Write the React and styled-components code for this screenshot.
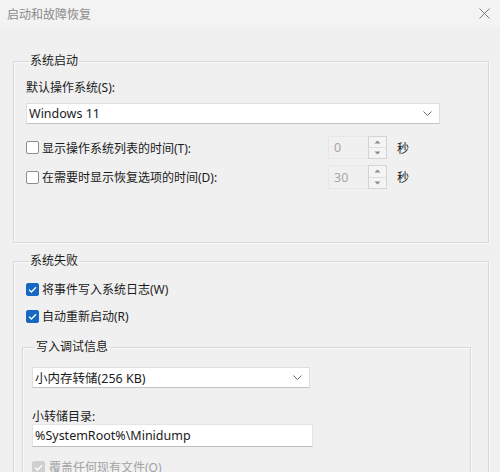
import React from "react";
import styled, { createGlobalStyle } from "styled-components";

const Global = createGlobalStyle`
  html, body { margin: 0; padding: 0; background: #f0f0f0; }
  body { font-family: "Noto Sans", "Noto Sans CJK SC", sans-serif; font-size: 12px; color: #1b1b1b; }
  #root { width: 500px; height: 472px; overflow: hidden; }
`;

const Window = styled.div`
  width: 500px;
  height: 472px;
  background: #f0f0f0;
  overflow: hidden;
`;

const TitleBar = styled.div`
  height: 27px;
  background: #f3f3f3;
  display: flex;
  align-items: center;
  justify-content: space-between;
  padding: 0 10px 0 7px;
  color: #8a8a8a;
  font-size: 12px;
`;

const Body = styled.div`
  padding: 26px 11px 0 13px;
`;

const Group = styled.fieldset`
  margin: ${(p) => p.$mt || 0}px ${(p) => p.$mr || 0}px 0 ${(p) => p.$ml || 0}px;
  padding: ${(p) => p.$pt}px 0 ${(p) => p.$pb || 0}px ${(p) => p.$pl}px;
  border: 1px solid #d9d9d9;
  box-shadow: inset 1px 1px 0 #fafafa, 1px 1px 0 #fafafa;
  min-width: 0;
  display: flex;
  flex-direction: column;
  align-items: flex-start;
`;

const Legend = styled.legend`
  margin-left: 3px;
  padding: 0 1px;
  line-height: 16px;
  font-size: 12px;
  color: #1b1b1b;
`;

const Label = styled.div`
  line-height: ${(p) => p.$lh || 16}px;
  margin-top: ${(p) => p.$mt || 0}px;
`;

const Select = styled.div`
  box-sizing: border-box;
  width: ${(p) => p.$w}px;
  height: ${(p) => p.$h || 21}px;
  margin-top: ${(p) => p.$mt || 0}px;
  background: #fff;
  border: 1px solid #dedede;
  border-bottom-color: #c4c4c4;
  display: flex;
  align-items: center;
  justify-content: space-between;
  padding: 0 7px 0 2px;
  font-size: 12.5px;
`;

const TextInput = styled.div`
  box-sizing: border-box;
  width: ${(p) => p.$w}px;
  height: 23px;
  background: #fff;
  border: 1px solid #e4e4e4;
  border-bottom-color: #bdbdbd;
  display: flex;
  align-items: center;
  padding: 0 2px;
  font-size: 12.5px;
`;

const Row = styled.div`
  display: grid;
  grid-template-columns: 302px auto auto;
  align-items: center;
  height: ${(p) => p.$h}px;
  margin-top: ${(p) => p.$mt || 0}px;
`;

const CheckLine = styled.label`
  display: flex;
  align-items: center;
  gap: ${(p) => p.$gap || 3}px;
  height: ${(p) => p.$h || 18}px;
  margin-top: ${(p) => p.$mt || 0}px;
  color: ${(p) => (p.$disabled ? "#a3a3a3" : "#1b1b1b")};
`;

const Box = styled.span`
  box-sizing: border-box;
  width: 13px;
  height: 13px;
  border-radius: 2px;
  flex: none;
  display: flex;
  align-items: center;
  justify-content: center;
  background: ${(p) => (p.$checked ? (p.$disabled ? "#cfcfcf" : "#1668c2") : "#fff")};
  border: 1px solid ${(p) => (p.$checked ? (p.$disabled ? "#cfcfcf" : "#1668c2") : "#8d8d8d")};
`;

const Spin = styled.div`
  display: flex;
  align-items: stretch;
  height: 100%;
`;

const SpinValue = styled.div`
  box-sizing: border-box;
  width: 40px;
  border: 1px solid #e8e8e8;
  border-right: none;
  background: #f0f0f0;
  color: #a6a6a6;
  display: flex;
  align-items: center;
  padding-left: 5px;
  font-size: 12.5px;
`;

const SpinButtons = styled.div`
  box-sizing: border-box;
  width: 19px;
  border: 1px solid #d4d4d4;
  display: flex;
  flex-direction: column;
  background: #f4f4f4;
`;

const SpinBtn = styled.div`
  flex: 1;
  display: flex;
  align-items: center;
  justify-content: center;
  & + & { border-top: 1px solid #dedede; }
`;

const Unit = styled.span`
  margin-left: 10px;
`;

const Check = () => (
  <svg width="9" height="7" viewBox="0 0 9 7">
    <path d="M1 3.6 L3.4 6 L8 1.2" fill="none" stroke="#fff" strokeWidth="1.3" />
  </svg>
);

const CheckBox = ({ checked, disabled }) => (
  <Box $checked={checked} $disabled={disabled}>{checked && <Check />}</Box>
);

const Chevron = () => (
  <svg width="9" height="5" viewBox="0 0 9 5">
    <path d="M0.5 0.5 L4.5 4.5 L8.5 0.5" fill="none" stroke="#6a6a6a" strokeWidth="1" />
  </svg>
);

const Tri = ({ up }) => (
  <svg width="7" height="4" viewBox="0 0 7 4">
    <path d={up ? "M0.5 3.5 L3.5 0.5 L6.5 3.5 Z" : "M0.5 0.5 L3.5 3.5 L6.5 0.5 Z"} fill="#8a8a8a" />
  </svg>
);

const SpinBox = ({ value }) => (
  <Spin>
    <SpinValue>{value}</SpinValue>
    <SpinButtons>
      <SpinBtn><Tri up /></SpinBtn>
      <SpinBtn><Tri /></SpinBtn>
    </SpinButtons>
  </Spin>
);

const Close = () => (
  <svg width="11" height="11" viewBox="0 0 11 11">
    <path d="M0.5 0.5 L10.5 10.5 M10.5 0.5 L0.5 10.5" stroke="#6e6e6e" strokeWidth="0.9" />
  </svg>
);

export default function App() {
  return (
    <Window>
      <Global />
      <TitleBar>
        <span>启动和故障恢复</span>
        <Close />
      </TitleBar>
      <Body>
        <Group $pt={11} $pl={12} $pb={53}>
          <Legend>系统启动</Legend>
          <Label>默认操作系统(S):</Label>
          <Select $w={414} $mt={7}>
            <span>Windows 11</span>
            <Chevron />
          </Select>
          <Row $h={23} $mt={12}>
            <CheckLine>
              <CheckBox />
              显示操作系统列表的时间(T):
            </CheckLine>
            <SpinBox value="0" />
            <Unit>秒</Unit>
          </Row>
          <Row $h={24} $mt={6}>
            <CheckLine>
              <CheckBox />
              在需要时显示恢复选项的时间(D):
            </CheckLine>
            <SpinBox value="30" />
            <Unit>秒</Unit>
          </Row>
        </Group>
        <Group $mt={10} $pt={11} $pl={12} $pb={40}>
          <Legend>系统失败</Legend>
          <CheckLine>
            <CheckBox checked />
            将事件写入系统日志(W)
          </CheckLine>
          <CheckLine $mt={9}>
            <CheckBox checked />
            自动重新启动(R)
          </CheckLine>
        <Group as="fieldset" $mt={14} $ml={-4} $pt={12} $pl={9} $pb={30} style={{ alignSelf: "stretch", marginRight: 17 }}>
            <Legend>写入调试信息</Legend>
            <Select $w={278}>
              <span>小内存转储(256 KB)</span>
              <Chevron />
            </Select>
            <Label $mt={22} $lh={14}>小转储目录:</Label>
            <TextInput $w={281}>%SystemRoot%\Minidump</TextInput>
            <CheckLine $mt={11} $gap={4} $disabled>
              <CheckBox checked disabled />
              覆盖任何现有文件(O)
            </CheckLine>
          </Group>
        </Group>
      </Body>
    </Window>
  );
}
